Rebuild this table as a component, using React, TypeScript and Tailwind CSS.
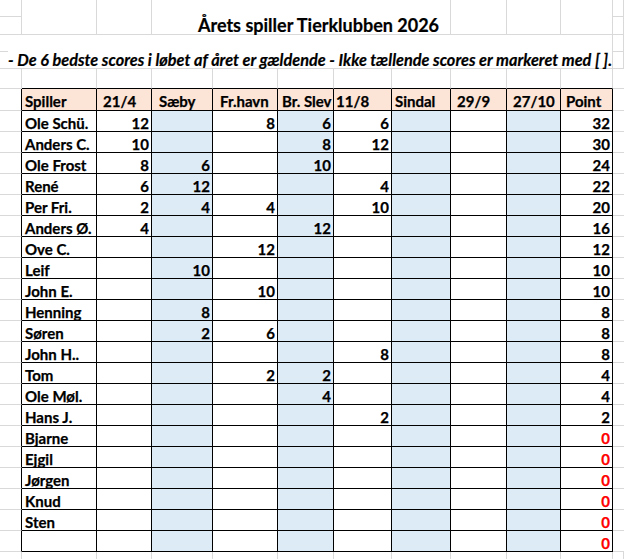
const GRID = 'grid grid-cols-[22px_75px_55px_61px_65px_56px_58px_59px_56px_54px_52px_1fr]'

const HEADERS = [
  { label: 'Spiller', pad: 'pl-[3px]' },
  { label: '21/4', pad: 'pl-[6px]' },
  { label: 'Sæby', pad: 'pl-[7px]' },
  { label: 'Fr.havn', pad: 'pl-[7px]' },
  { label: 'Br. Slev', pad: 'pl-[4px]' },
  { label: '11/8', pad: 'pl-[2px]' },
  { label: 'Sindal', pad: 'pl-[3px]' },
  { label: '29/9', pad: 'pl-[6px]' },
  { label: '27/10', pad: 'pl-[6px]' },
  { label: 'Point', pad: 'pl-[5px]' },
]

// name, 21/4, Sæby, Fr.havn, Br. Slev, 11/8, Sindal, 29/9, 27/10, Point
const ROWS: string[][] = [
  ['Ole Schü.', '12', '', '8', '6', '6', '', '', '', '32'],
  ['Anders C.', '10', '', '', '8', '12', '', '', '', '30'],
  ['Ole Frost', '8', '6', '', '10', '', '', '', '', '24'],
  ['René', '6', '12', '', '', '4', '', '', '', '22'],
  ['Per Fri.', '2', '4', '4', '', '10', '', '', '', '20'],
  ['Anders Ø.', '4', '', '', '12', '', '', '', '', '16'],
  ['Ove C.', '', '', '12', '', '', '', '', '', '12'],
  ['Leif', '', '10', '', '', '', '', '', '', '10'],
  ['John E.', '', '', '10', '', '', '', '', '', '10'],
  ['Henning', '', '8', '', '', '', '', '', '', '8'],
  ['Søren', '', '2', '6', '', '', '', '', '', '8'],
  ['John H..', '', '', '', '', '8', '', '', '', '8'],
  ['Tom', '', '', '2', '2', '', '', '', '', '4'],
  ['Ole Møl.', '', '', '', '4', '', '', '', '', '4'],
  ['Hans J.', '', '', '', '', '2', '', '', '', '2'],
  ['Bjarne', '', '', '', '', '', '', '', '', '0'],
  ['Ejgil', '', '', '', '', '', '', '', '', '0'],
  ['Jørgen', '', '', '', '', '', '', '', '', '0'],
  ['Knud', '', '', '', '', '', '', '', '', '0'],
  ['Sten', '', '', '', '', '', '', '', '', '0'],
  ['', '', '', '', '', '', '', '', '', '0'],
]

const BLUE_COLS = [2, 4, 6, 8]
const SPAN = Array.from({ length: 10 })

function GrayRow({ height, bottom = true, strips = false }: { height: string; bottom?: boolean; strips?: boolean }) {
  return (
    <div className={`${GRID} ${height}`}>
      {Array.from({ length: 12 }).map((_, i) => {
        const edge = i === 0 || i === 11
        const line = bottom || (strips && edge)
        return (
          <div
            key={i}
            className={`border-r border-[#d9d9d9] ${line ? 'border-b' : ''}`}
          />
        )
      })}
    </div>
  )
}

function TopBand() {
  return (
    <div className="grid">
      <div className="col-start-1 row-start-1">
        <GrayRow height="h-[17px]" bottom={false} strips />
        <GrayRow height="h-[18px]" />
        <GrayRow height="h-[17px]" />
        <GrayRow height="h-[17px]" />
        <div className={`${GRID} h-[20px]`}>
          <div className="border-r border-b border-[#d9d9d9]" />
          {SPAN.map((_, i) => (
            <div key={i} className="border-r border-[#d9d9d9] border-b border-b-black" />
          ))}
          <div className="border-b border-[#d9d9d9]" />
        </div>
      </div>

      <div className="col-start-1 row-start-1 flex justify-center pl-[13px]">
        <span className="flex h-[34px] items-end bg-white text-[18px] font-bold leading-[18px] text-black [-webkit-text-stroke:0.2px_black]">
          Årets spiller Tierklubben 2026
        </span>
      </div>

      <div className="col-start-1 row-start-1 flex items-start pl-[8px] pt-[35px]">
        <span className="flex h-[33px] items-end bg-white text-[16.3px] font-bold italic leading-[16px] text-black [-webkit-text-stroke:0.2px_black]">
          - De 6 bedste scores i løbet af året er gældende - Ikke tællende scores er markeret med [ ].
        </span>
      </div>
    </div>
  )
}

function HeaderRow() {
  return (
    <div className={`${GRID} h-[22px]`}>
      <div className="border-r border-r-black border-b border-b-[#d9d9d9]" />
      {HEADERS.map((h) => (
        <div
          key={h.label}
          className={`flex items-end overflow-hidden whitespace-nowrap border-r border-b border-black bg-[#fce4d6] text-[15px] font-bold leading-[18px] [-webkit-text-stroke:0.25px_black] ${h.pad}`}
        >
          {h.label}
        </div>
      ))}
      <div className="border-b border-[#d9d9d9]" />
    </div>
  )
}

function DataRow({ cells }: { cells: string[] }) {
  return (
    <div className={`${GRID} h-[21px]`}>
      <div className="border-r border-r-black border-b border-b-[#d9d9d9]" />
      {cells.map((value, i) => {
        const blue = BLUE_COLS.includes(i)
        const isName = i === 0
        const isZero = i === 9 && value === '0'
        return (
          <div
            key={i}
            className={`flex items-end overflow-hidden whitespace-nowrap border-r border-b border-black text-[15px] font-bold leading-[16px] ${
              blue ? 'bg-[#ddebf7]' : 'bg-white'
            } ${isName ? 'justify-start pl-[3px]' : 'justify-end pr-[2px]'} ${
              isZero ? 'text-[#ff0000] [-webkit-text-stroke:0.25px_#ff0000]' : 'text-black [-webkit-text-stroke:0.25px_black]'
            }`}
          >
            {value}
          </div>
        )
      })}
      <div className="border-b border-[#d9d9d9]" />
    </div>
  )
}

export default function App() {
  return (
    <div
      className="h-[559px] w-[624px] overflow-hidden bg-white text-black"
      style={{ fontFamily: 'Lato, "Noto Sans", sans-serif' }}
    >
      <TopBand />
      <HeaderRow />
      {ROWS.map((row, i) => (
        <DataRow key={i} cells={row} />
      ))}
      <GrayRow height="h-[20px]" />
    </div>
  )
}
